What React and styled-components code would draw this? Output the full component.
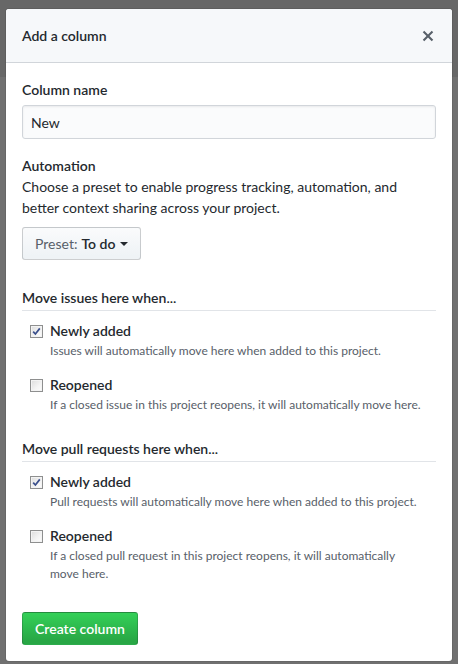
import React from "react";
import styled, { createGlobalStyle } from "styled-components";

const Global = createGlobalStyle`
  html, body { margin: 0; padding: 0; }
  body {
    background: linear-gradient(to bottom, #676767 0, #676767 77px, #707070 77px);
    font-family: Lato, "Liberation Sans", sans-serif;
    color: #24292e;
    -webkit-font-smoothing: antialiased;
  }
`;

const Page = styled.div`
  padding: 9px 6px 4px;
  min-height: 664px;
  box-sizing: border-box;
`;

const Modal = styled.div`
  background: #fff;
  border-radius: 3px;
  overflow: hidden;
  box-shadow: 0 0 0 1px rgba(0, 0, 0, 0.08);
`;

const Header = styled.div`
  display: flex;
  align-items: center;
  justify-content: space-between;
  padding: 16px;
  background: #f6f8fa;
  border-bottom: 1px solid #d1d5da;
`;

const Title = styled.h3`
  margin: 0;
  font-size: 14px;
  line-height: 21px;
  font-weight: 600;
`;

const Close = styled.button`
  border: 0;
  background: none;
  padding: 0 2px;
  display: flex;
  color: #586069;
  cursor: pointer;
`;

const Body = styled.div`
  padding: 16px;
  display: flex;
  flex-direction: column;
`;

const Label = styled.label`
  font-size: 14px;
  line-height: 21px;
  font-weight: 600;
  margin-bottom: ${(p) => p.$mb || 0}px;
`;

const Input = styled.input`
  box-sizing: border-box;
  height: 34px;
  padding: 6px 8px;
  font-family: inherit;
  font-size: 14px;
  color: #24292e;
  background: #fafbfc;
  border: 1px solid #d1d5da;
  border-radius: 3px;
  box-shadow: inset 0 1px 2px rgba(27, 31, 35, 0.075);
  outline: none;
  margin-bottom: 16px;
`;

const Text = styled.p`
  margin: 0;
  font-size: 14px;
  line-height: 21px;
`;

const SelectButton = styled.button`
  align-self: flex-start;
  display: inline-flex;
  align-items: center;
  gap: 4px;
  height: 33px;
  margin-top: 9px;
  padding: 0 12px;
  font-family: inherit;
  font-size: 14px;
  color: #24292e;
  background: linear-gradient(-180deg, #fafbfc 0%, #eff3f6 90%);
  border: 1px solid rgba(27, 31, 35, 0.2);
  border-radius: 3px;
`;

const Muted = styled.span`
  color: #586069;
`;

const Strong = styled.span`
  font-weight: 600;
`;

const Caret = styled.span`
  display: inline-block;
  width: 0;
  height: 0;
  margin-left: 1px;
  border-top: 4px solid #24292e;
  border-left: 4px solid transparent;
  border-right: 4px solid transparent;
`;

const Section = styled.div`
  margin-top: ${(p) => p.$mt}px;
  display: flex;
  flex-direction: column;
`;

const SectionTitle = styled.h4`
  margin: 0;
  padding-bottom: 2px;
  font-size: 14px;
  line-height: 21px;
  font-weight: 600;
  border-bottom: 1px solid #e1e4e8;
`;

const Options = styled.div`
  display: flex;
  flex-direction: column;
  gap: 15px;
  padding: 10px 0 0 8px;
`;

const Option = styled.label`
  display: grid;
  grid-template-columns: 13px 1fr;
  column-gap: 7px;
  align-items: start;
`;

const Box = styled.span`
  box-sizing: border-box;
  width: 13px;
  height: 13px;
  margin-top: 4px;
  border: 1px solid #8e8f8f;
  background: linear-gradient(135deg, #dcdcdc 0%, #f4f4f4 60%, #fdfdfd 100%);
  box-shadow: inset 0 0 0 1px #f3f3f3;
  display: flex;
  align-items: center;
  justify-content: center;
`;

const OptionName = styled.span`
  font-size: 14px;
  line-height: 20px;
  font-weight: 600;
`;

const Note = styled.span`
  grid-column: 2;
  font-size: 12px;
  line-height: 18px;
  color: #586069;
  margin-top: 1px;
  max-width: ${(p) => p.$max || "none"};
`;

const Primary = styled.button`
  align-self: flex-start;
  margin-top: 29px;
  height: 33px;
  padding: 0 12px;
  font-family: inherit;
  font-size: 14px;
  font-weight: 600;
  color: #fff;
  background: linear-gradient(-180deg, #34d058 0%, #28a745 90%);
  border: 1px solid rgba(27, 31, 35, 0.2);
  border-radius: 3px;
`;

function Check({ checked }) {
  return (
    <Box>
      {checked && (
        <svg width="9" height="9" viewBox="0 0 9 9">
          <path d="M1.2 4.6 L3.4 7 L7.8 1.4" fill="none" stroke="#3a4f8c" strokeWidth="1.7" />
        </svg>
      )}
    </Box>
  );
}

function Item({ checked, name, note, max }) {
  return (
    <Option>
      <Check checked={checked} />
      <OptionName>{name}</OptionName>
      <Note $max={max}>{note}</Note>
    </Option>
  );
}

export default function App() {
  return (
    <>
      <Global />
      <Page>
        <Modal>
          <Header>
            <Title>Add a column</Title>
            <Close aria-label="Close">
              <svg width="12" height="16" viewBox="0 0 12 16" fill="currentColor">
                <path d="M7.48 8l3.75 3.75-1.48 1.48L6 9.48l-3.75 3.75-1.48-1.48L4.52 8 .77 4.25l1.48-1.48L6 6.52l3.75-3.75 1.48 1.48L7.48 8z" />
              </svg>
            </Close>
          </Header>
          <Body>
            <Label $mb={5}>Column name</Label>
            <Input defaultValue="New" />
            <Label>Automation</Label>
            <Text>
              Choose a preset to enable progress tracking, automation, and better context sharing across your project.
            </Text>
            <SelectButton>
              <Muted>Preset:</Muted> <Strong>To do</Strong>
              <Caret />
            </SelectButton>
            <Section $mt={27}>
              <SectionTitle>Move issues here when...</SectionTitle>
              <Options>
                <Item checked name="Newly added" note="Issues will automatically move here when added to this project." />
                <Item name="Reopened" note="If a closed issue in this project reopens, it will automatically move here." />
              </Options>
            </Section>
            <Section $mt={24}>
              <SectionTitle>Move pull requests here when...</SectionTitle>
              <Options>
                <Item checked name="Newly added" note="Pull requests will automatically move here when added to this project." />
                <Item
                  name="Reopened"
                  max="350px"
                  note="If a closed pull request in this project reopens, it will automatically move here."
                />
              </Options>
            </Section>
            <Primary>Create column</Primary>
          </Body>
        </Modal>
      </Page>
    </>
  );
}
